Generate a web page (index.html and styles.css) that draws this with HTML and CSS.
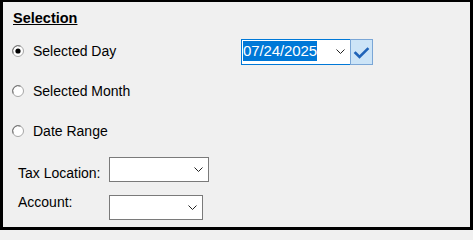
FILE: index.html
```html
<!DOCTYPE html>
<html lang="en">
<head>
<meta charset="utf-8">
<title>Selection</title>
<link rel="stylesheet" href="styles.css">
</head>
<body>
<div class="panel">
  <div class="heading">Selection</div>

  <div class="options">
    <div class="option-row">
      <label class="option option-wide">
        <svg class="radio" width="12" height="12" viewBox="0 0 12 12">
          <circle cx="6" cy="6" r="5.5" fill="#fff" stroke="#a6a6a6"/>
          <path d="M1.2 8.5 A5.5 5.5 0 0 1 8.5 1.2" fill="none" stroke="#6e6e6e" stroke-width="1"/>
          <circle cx="6" cy="6" r="2.6" fill="#000"/>
        </svg>
        <span class="option-text">Selected Day</span>
      </label>
      <div class="datepicker">
        <div class="date-box">
          <span class="date-text">07/24/2025</span>
          <svg class="chev date-chev" width="9" height="5" viewBox="0 0 9 5">
            <polyline points="0.5,0.5 4.5,4.5 8.5,0.5" fill="none" stroke="#222" stroke-width="1"/>
          </svg>
        </div>
        <div class="check-btn">
          <svg width="23" height="26" viewBox="0 0 23 26">
            <polyline points="5.5,14 9.5,18 17.5,10" fill="none" stroke="#1f63b8" stroke-width="2.6" stroke-linecap="square"/>
          </svg>
        </div>
      </div>
    </div>

    <div class="option-row">
      <label class="option">
        <svg class="radio" width="12" height="12" viewBox="0 0 12 12">
          <circle cx="6" cy="6" r="5.5" fill="#fff" stroke="#a6a6a6"/>
          <path d="M1.2 8.5 A5.5 5.5 0 0 1 8.5 1.2" fill="none" stroke="#6e6e6e" stroke-width="1"/>
        </svg>
        <span class="option-text">Selected Month</span>
      </label>
    </div>

    <div class="option-row">
      <label class="option">
        <svg class="radio" width="12" height="12" viewBox="0 0 12 12">
          <circle cx="6" cy="6" r="5.5" fill="#fff" stroke="#a6a6a6"/>
          <path d="M1.2 8.5 A5.5 5.5 0 0 1 8.5 1.2" fill="none" stroke="#6e6e6e" stroke-width="1"/>
        </svg>
        <span class="option-text">Date Range</span>
      </label>
    </div>
  </div>

  <div class="fields">
    <div class="field-label label-tax">Tax Location:</div>
    <div class="select select-tax">
      <svg class="chev" width="9" height="5" viewBox="0 0 9 5">
        <polyline points="0.5,0.5 4.5,4.5 8.5,0.5" fill="none" stroke="#222" stroke-width="1"/>
      </svg>
    </div>
    <div class="field-label label-acct">Account:</div>
    <div class="select select-acct">
      <svg class="chev" width="9" height="5" viewBox="0 0 9 5">
        <polyline points="0.5,0.5 4.5,4.5 8.5,0.5" fill="none" stroke="#222" stroke-width="1"/>
      </svg>
    </div>
  </div>
</div>
</body>
</html>
```

FILE: styles.css
```css
html, body {
  margin: 0;
  padding: 0;
  background: #f0f0f0;
}

body {
  font-family: "Liberation Sans", Arial, sans-serif;
  font-size: 14px;
  color: #000;
}

.panel {
  box-sizing: border-box;
  width: 473px;
  height: 230px;
  background: #f0f0f0;
  border-style: solid;
  border-color: #000;
  border-width: 2px 3px 3px 3px;
  padding: 8px 0 0 9px;
  display: flex;
  flex-direction: column;
}

.heading {
  font-size: 14.5px;
  font-weight: bold;
  line-height: 17px;
  height: 17px;
  padding-left: 1px;
  text-decoration: underline;
  text-underline-offset: 1px;
}

.options {
  margin-top: 12px;
  display: flex;
  flex-direction: column;
  gap: 16px;
}

.option-row {
  height: 24px;
  display: flex;
  align-items: center;
}

.option {
  display: flex;
  align-items: center;
  gap: 9px;
}

.option-wide {
  width: 229px;
  flex: none;
}

.radio {
  display: block;
  flex: none;
}

.option-text {
  line-height: 16px;
}

.datepicker {
  align-self: flex-start;
  display: flex;
  margin-bottom: -2px;
}

.date-box {
  box-sizing: border-box;
  width: 110px;
  height: 26px;
  border: 1px solid #0078d7;
  background: #fff;
  padding: 1px 5px 0 1px;
  display: flex;
  align-items: flex-start;
}

.date-text {
  display: inline-block;
  font-size: 15px;
  line-height: 20px;
  height: 20px;
  letter-spacing: -0.1px;
  background: #0078d7;
  color: #fff;
}

.chev {
  display: block;
  flex: none;
  margin-left: auto;
}

.date-chev {
  margin-top: 8px;
}

.check-btn {
  box-sizing: border-box;
  width: 23px;
  height: 26px;
  margin-left: -1px;
  background: #cce4f7;
  border: 1px solid #7aa6d6;
}

.check-btn svg {
  display: block;
  margin: -1px 0 0 -1px;
}

.fields {
  margin-top: 14px;
  padding-left: 6px;
  display: grid;
  grid-template-columns: 91px auto;
  row-gap: 13px;
  align-items: start;
  justify-items: start;
}

.field-label {
  line-height: 16px;
}

.label-tax {
  padding-top: 8px;
}

.label-acct {
  margin-top: -1px;
}

.select {
  box-sizing: border-box;
  height: 25px;
  background: #fff;
  border: 1px solid #7a7a7a;
  display: flex;
  align-items: center;
  padding-right: 5px;
}

.select-tax {
  width: 100px;
}

.select-acct {
  width: 94px;
}
```
